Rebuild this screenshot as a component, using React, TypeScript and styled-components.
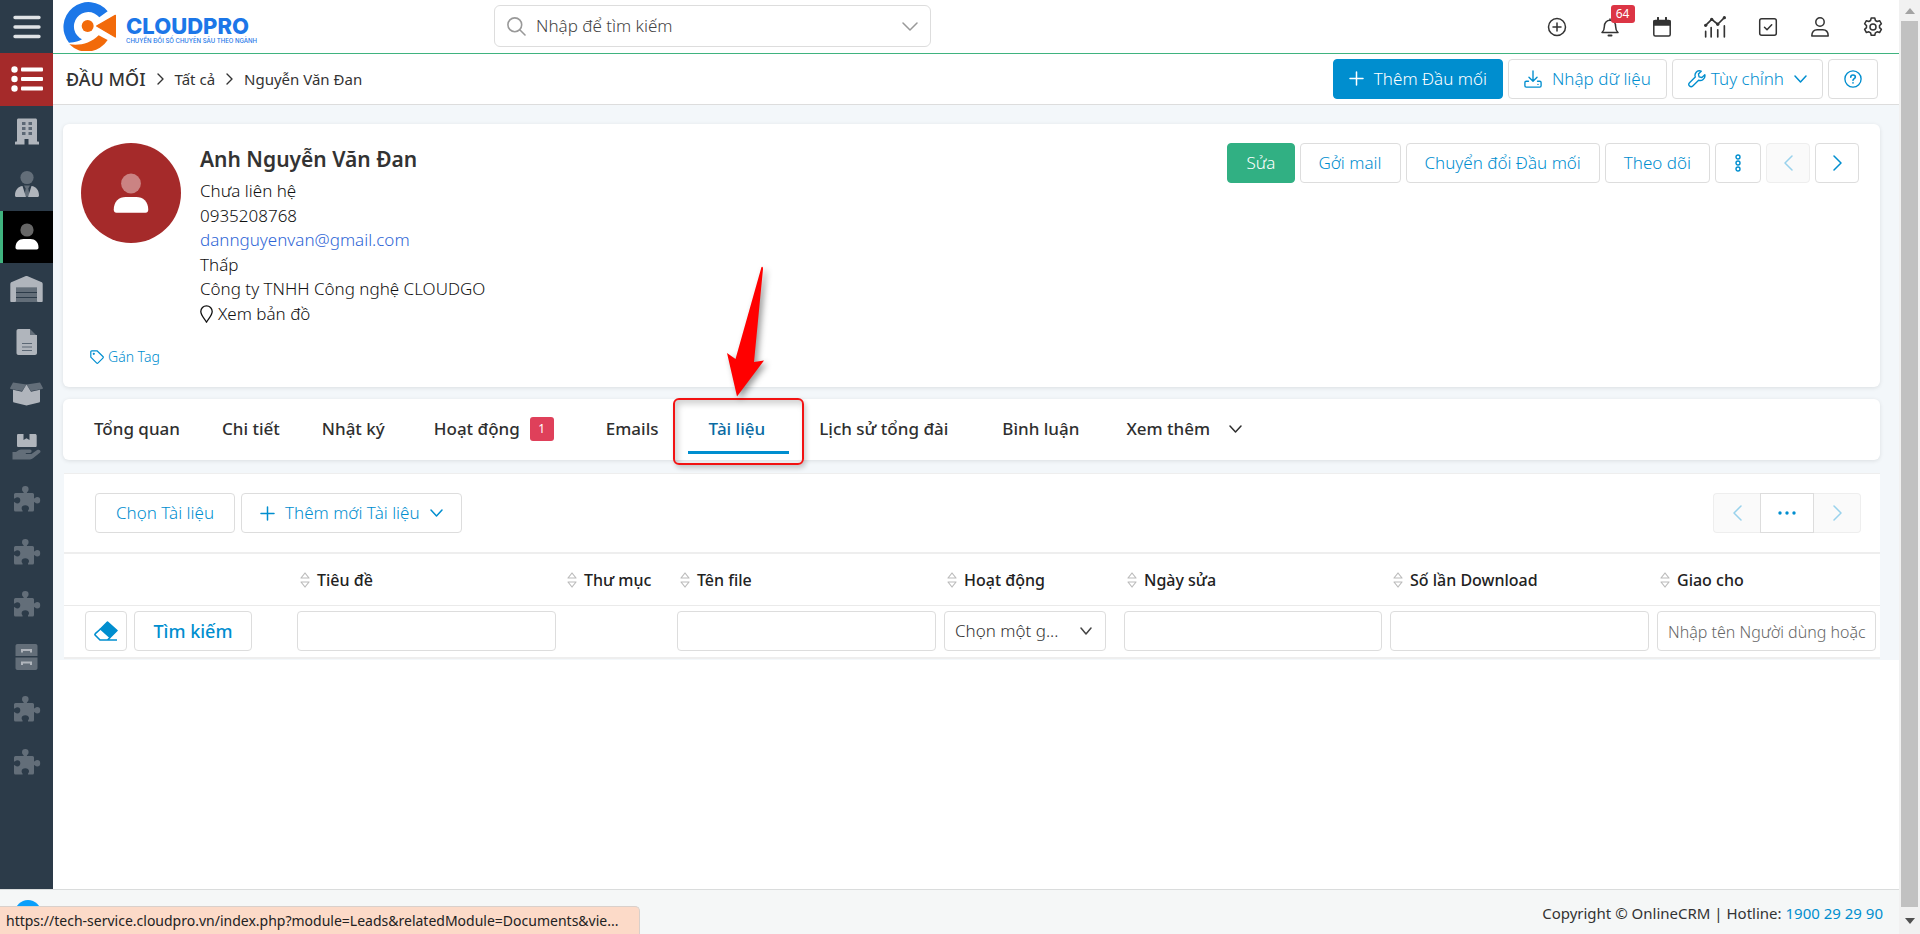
import React from 'react';
import styled, { createGlobalStyle, css } from 'styled-components';

const BLUE = '#008ecf';
const INK = '#333';
const LINE = '#ddd';

const GlobalStyle = createGlobalStyle`
  * { box-sizing: border-box; }
  body { margin: 0; background: #fff; color: ${INK}; font: 400 16px/24px "Noto Sans", "Open Sans", sans-serif; }
  button, input, select { font: inherit; }
  button { cursor: pointer; }
  a { color: inherit; text-decoration: none; }
  svg { display: block; flex: none; }
`;

/* ---------- Frame ---------- */

const Page = styled.div`
  display: grid;
  grid-template-columns: 53px minmax(0, 1fr) 21px;
  grid-template-rows: 1fr 45px;
  min-height: 100vh;
`;

const Sidebar = styled.nav`
  background: #2c3b49;
`;

const MenuToggle = styled.button`
  display: flex;
  align-items: center;
  justify-content: center;
  width: 100%;
  height: 53px;
  padding: 0;
  border: 0;
  background: none;
`;

const ModuleList = styled.ul`
  display: flex;
  flex-direction: column;
  height: 735px;
  margin: 0;
  padding: 0;
  list-style: none;
`;

const ModuleItem = styled.li<{ $tone?: 'list' | 'current' }>`
  flex: 1;
  display: flex;
  ${(p) => p.$tone === 'list' && css`background: #a52a2a;`}
  ${(p) => p.$tone === 'current' && css`background: #000; box-shadow: inset 3px 0 #3fb37f;`}
`;

const ModuleLink = styled.a`
  flex: 1;
  display: flex;
  align-items: center;
  justify-content: center;
`;

const Main = styled.main`
  display: flex;
  flex-direction: column;
  min-width: 0;
`;

const Footer = styled.footer`
  grid-column: 1 / 3;
  display: flex;
  justify-content: space-between;
  padding: 0 16px 0 15px;
  border-top: 1px solid #dadcdc;
  background: #f5f7f7;
  font-size: 15px;
  overflow: hidden;
`;

const ChatBubble = styled.span`
  width: 26px;
  height: 26px;
  margin-top: 10px;
  border-radius: 50%;
  background: #0a9ffb;
`;

const Copyright = styled.p`
  margin: 11px 0 0;
  a { color: ${BLUE}; }
`;

const ScrollTrack = styled.div`
  grid-column: 3;
  grid-row: 1 / 3;
  display: flex;
  flex-direction: column;
  align-items: center;
  background: #f1f1f1;
`;

const ScrollArrow = styled.span<{ $down?: boolean }>`
  display: flex;
  align-items: center;
  justify-content: center;
  width: 100%;
  height: ${(p) => (p.$down ? 27 : 21)}px;
`;

const ScrollThumb = styled.span`
  flex: 1;
  width: 17px;
  background: #c1c1c1;
`;

const LinkStatus = styled.div`
  position: fixed;
  left: 0;
  bottom: 0;
  width: 640px;
  height: 28px;
  padding: 2px 6px 0;
  border: 1px solid #d9d0cb;
  border-width: 1px 1px 0 0;
  border-top-right-radius: 5px;
  background: #fcdac8;
  color: #222;
  font-size: 14px;
  white-space: nowrap;
`;

/* ---------- Top bar ---------- */

const TopBar = styled.header`
  display: flex;
  align-items: stretch;
  height: 54px;
  border-bottom: 1px solid #3fb37f;
`;

const Brand = styled.a`
  display: flex;
  gap: 10px;
  width: 441px;
  padding: 1px 0 0 10px;
  color: #1c77e8;
`;

const BrandText = styled.span`
  display: flex;
  flex-direction: column;
  padding-top: 13px;
  font-family: Inter, sans-serif;
`;

const BrandName = styled.strong`
  font-size: 22px;
  line-height: 24px;
  font-weight: 800;
`;

const BrandTagline = styled.span`
  font-size: 6px;
  line-height: 6px;
  font-weight: 500;
`;

const SearchBox = styled.label`
  display: flex;
  align-items: center;
  gap: 10px;
  width: 437px;
  height: 42px;
  margin-top: 5px;
  padding: 0 12px;
  border: 1px solid ${LINE};
  border-radius: 6px;
  input {
    flex: 1;
    min-width: 0;
    padding: 0;
    border: 0;
    outline: 0;
    background: none;
    font-size: 17px;
    font-weight: 300;
  }
  input::placeholder { color: #444; opacity: 1; }
`;

const QuickActions = styled.div`
  display: flex;
  width: 368px;
  margin-left: auto;
`;

const QuickAction = styled.button`
  position: relative;
  flex: 1;
  display: flex;
  align-items: center;
  justify-content: center;
  padding: 1px 0 0;
  border: 0;
  background: none;
  color: ${INK};
`;

const AlertCount = styled.span`
  position: absolute;
  top: 5px;
  left: 27px;
  width: 24px;
  height: 18px;
  border-radius: 3px;
  background: #dc3545;
  color: #fff;
  font-size: 12px;
  line-height: 18px;
`;

/* ---------- Buttons ---------- */

const Button = styled.button<{ $tone?: 'primary' | 'success'; $width?: number; $snug?: boolean; $medium?: boolean }>`
  display: inline-flex;
  align-items: center;
  justify-content: center;
  gap: 10px;
  height: 40px;
  ${(p) => p.$width && css`width: ${p.$width}px;`}
  padding: 0 ${(p) => (p.$width ? 0 : p.$snug ? 15 : 18)}px;
  border: 1px solid ${LINE};
  border-radius: 4px;
  background: #fff;
  color: ${BLUE};
  font-size: ${(p) => (p.$medium ? 18 : 17)}px;
  font-weight: ${(p) => (p.$medium ? 500 : 300)};
  white-space: nowrap;
  ${(p) => p.$tone === 'primary' && css`background: ${BLUE}; border-color: ${BLUE}; color: #fff;`}
  ${(p) => p.$tone === 'success' && css`background: #31b083; border-color: #31b083; color: #fff;`}
  &:disabled { background: #fafafa; border-color: #eee; color: #99d2ec; }
`;

const IconLabel = styled.span`
  display: flex;
  align-items: center;
  gap: 5px;
`;

/* ---------- Breadcrumb bar ---------- */

const CrumbBar = styled.div`
  display: flex;
  align-items: center;
  justify-content: space-between;
  height: 51px;
  padding: 0 21px 1px 13px;
  border-bottom: 1px solid ${LINE};
`;

const Crumbs = styled.nav`
  display: flex;
  align-items: center;
  gap: 11px;
  font-size: 15px;
`;

const CrumbRoot = styled.a`
  font-size: 18px;
  font-weight: 500;
`;

const ButtonRow = styled.div<{ $gap?: number }>`
  display: flex;
  gap: ${(p) => p.$gap ?? 5}px;
`;

/* ---------- Record ---------- */

const Content = styled.div`
  display: flex;
  flex-direction: column;
  padding: 19px 19px 0 10px;
  background: #f3f7fa;
`;

const Card = styled.section`
  border-radius: 6px;
  background: #fff;
  box-shadow: 0 1px 4px rgba(0, 0, 0, 0.1);
`;

const RecordCard = styled(Card)`
  height: 263px;
  padding: 19px 21px 0 18px;
`;

const RecordTop = styled.div`
  display: flex;
  align-items: flex-start;
  gap: 19px;
  height: 202px;
`;

const Avatar = styled.div`
  display: flex;
  align-items: center;
  justify-content: center;
  width: 100px;
  height: 100px;
  border-radius: 50%;
  background: #a52a2a;
`;

const Person = styled.div`
  flex: 1;
`;

const PersonName = styled.h1`
  margin: 0 0 4px;
  font-size: 21px;
  line-height: 32px;
  font-weight: 600;
`;

const Facts = styled.ul`
  margin: 0;
  padding: 0;
  list-style: none;
  font-size: 17px;
  font-weight: 300;
  color: #111;
`;

const Fact = styled.li`
  height: 24px;
  line-height: 24px;
  &:nth-child(odd) { height: 25px; }
`;

const MailLink = styled.a`
  color: #2f66d6;
`;

const TagButton = styled.button`
  display: flex;
  align-items: center;
  gap: 4px;
  margin: 0;
  padding: 0 0 0 9px;
  border: 0;
  background: none;
  color: ${BLUE};
  font-size: 14px;
  line-height: 24px;
  font-weight: 300;
`;

/* ---------- Tabs ---------- */

const TabCard = styled(Card)`
  display: flex;
  height: 61px;
  margin-top: 12px;
  padding-left: 10px;
`;

const Tab = styled.a<{ $pad?: number; $active?: boolean }>`
  position: relative;
  display: flex;
  align-items: center;
  gap: 10px;
  padding: 0 ${(p) => p.$pad ?? 21}px 2px;
  color: ${(p) => (p.$active ? '#0a6ba3' : '#2f2f2f')};
  font-size: 17px;
  font-weight: 500;
  ${(p) => p.$active && css`
    &::after {
      content: '';
      position: absolute;
      left: 5px;
      right: 2px;
      bottom: 6px;
      height: 3px;
      background: ${BLUE};
    }
  `}
`;

const TabMore = styled(Tab)`
  gap: 19px;
`;

const TabCount = styled.span`
  width: 24px;
  height: 24px;
  border-radius: 3px;
  background: #df405a;
  color: #fff;
  font-size: 12px;
  line-height: 24px;
  font-weight: 400;
  text-align: center;
`;

const Highlight = styled.span`
  position: absolute;
  inset: -1px -13px -5px -10px;
  border: 2px solid #f21313;
  border-radius: 6px;
  box-shadow: 2px 3px 5px rgba(0, 0, 0, 0.2), inset 3px 4px 6px rgba(0, 0, 0, 0.18);
`;

const ArrowMark = styled.svg`
  position: absolute;
  left: 42px;
  bottom: 63px;
  filter: drop-shadow(3px 3px 3px rgba(0, 0, 0, 0.4));
`;

/* ---------- Related list ---------- */

const Panel = styled.section`
  margin: 13px 0 1px 1px;
  border-top: 1px solid #eee;
  background: #fff;
`;

const PanelBar = styled.div`
  display: flex;
  justify-content: space-between;
  padding: 19px 19px 19px 31px;
`;

const Pager = styled.div`
  display: flex;
  & > button { border-radius: 0; }
  & > :first-child { border-right: 0; border-radius: 4px 0 0 4px; }
  & > :last-child { border-left: 0; border-radius: 0 4px 4px 0; }
`;

const DataTable = styled.table`
  width: 100%;
  table-layout: fixed;
  border-collapse: collapse;
  border-top: 2px solid #eee;
  border-bottom: 2px solid #eee;
`;

const HeadCell = styled.th`
  height: 52px;
  padding: 2px 0 0 7px;
  border-bottom: 1px solid #eaeaea;
  color: #222;
  font-size: 16px;
  font-weight: 500;
  text-align: left;
`;

const SortLabel = styled.span`
  display: flex;
  align-items: center;
  gap: 7px;
  white-space: nowrap;
`;

const FilterCell = styled.td`
  height: 53px;
  padding: 0 4px;
`;

const ActionCell = styled(FilterCell)`
  padding-left: 21px;
`;

const Field = styled.input`
  display: block;
  width: 100%;
  height: 40px;
  padding: 2px 6px 0 10px;
  border: 1px solid ${LINE};
  border-radius: 4px;
  background: #fff;
  font-size: 16px;
  font-weight: 300;
  &::placeholder { color: #666; opacity: 1; }
`;

const SelectWrap = styled.span`
  position: relative;
  display: block;
  width: 162px;
  svg { position: absolute; right: 14px; top: 16px; pointer-events: none; }
`;

const Select = styled.select`
  appearance: none;
  width: 100%;
  height: 40px;
  padding: 0 40px 0 10px;
  border: 1px solid ${LINE};
  border-radius: 4px;
  background: #fff;
  color: #333;
  font-size: 17px;
  font-weight: 300;
`;

/* ---------- Icons ---------- */

const Chevron = ({ dir, w = 13, h = 8, stroke = 'currentColor', sw = 1.5 }: { dir: 'left' | 'right' | 'down' | 'up'; w?: number; h?: number; stroke?: string; sw?: number }) => {
  const d = {
    down: `M1 1L${w / 2} ${h - 1}L${w - 1} 1`,
    up: `M1 ${h - 1}L${w / 2} 1L${w - 1} ${h - 1}`,
    right: `M1 1L${w - 1} ${h / 2}L1 ${h - 1}`,
    left: `M${w - 1} 1L1 ${h / 2}L${w - 1} ${h - 1}`,
  }[dir];
  return (
    <svg width={w} height={h} viewBox={`0 0 ${w} ${h}`} fill="none" stroke={stroke} strokeWidth={sw} strokeLinecap="round" strokeLinejoin="round" aria-hidden="true">
      <path d={d} />
    </svg>
  );
};

const PlusIcon = () => (
  <svg width="15" height="15" viewBox="0 0 15 15" stroke="currentColor" strokeWidth="1.5" strokeLinecap="round" aria-hidden="true">
    <path d="M7.5 1v13M1 7.5h13" />
  </svg>
);

const LineIcon = ({ size = 20, children }: { size?: number; children: React.ReactNode }) => (
  <svg width={size} height={size} viewBox="0 0 20 20" fill="none" stroke="currentColor" strokeWidth="1.5" strokeLinecap="round" strokeLinejoin="round" aria-hidden="true">
    {children}
  </svg>
);

const DIM = 'rgba(176,181,188,.42)';
const LIT = '#b0b5bc';

const SideIcon = ({ width = 28, children }: { width?: number; children: React.ReactNode }) => (
  <svg width={width} height="28" viewBox={`0 0 ${width} 28`} aria-hidden="true">{children}</svg>
);

const Puzzle = () => (
  <SideIcon>
    <path fill={DIM} d="M1 9.500Q1 8 2.500 8H10.800C10.800 6.800 9 6.500 9 4.200A3.300 3.300 0 0 1 15.600 4.200C15.600 6.500 13.800 6.800 13.800 8H19.500Q21 8 21 9.500V13.600C22 13.600 22.500 12 24.200 12A3 3.300 0 0 1 24.200 18.600C22.500 18.600 22 17 21 17V25Q21 26.500 19.500 26.500H15C14.500 25.500 16 24.800 16 23.200C16 21.400 14.500 20.300 12.300 20.300S8.600 21.400 8.600 23.200C8.600 24.800 10 25.500 9.600 26.500H2.500Q1 26.500 1 25V17C2 17 2.800 18.400 4.300 18.400A3 3.100 0 0 0 4.300 12.200C2.800 12.200 2 13.600 1 13.600Z" />
  </SideIcon>
);

const PersonGlyph = ({ scale = 1, headOpacity = 0.4 }: { scale?: number; headOpacity?: number }) => (
  <svg width={24 * scale} height={27 * scale} viewBox="0 0 24 27" fill="#fff" aria-hidden="true">
    <circle cx="12" cy="7" r="6.600" opacity={headOpacity} />
    <path d="M.5 24.500C.5 19 4 16 8.500 16h7c4.500 0 8 3 8 8.500 0 1.200-.7 2-1.800 2H2.300c-1.100 0-1.800-.8-1.800-2z" />
  </svg>
);

const modules: { name: string; tone?: 'list' | 'current'; icon: React.ReactNode }[] = [
  {
    name: 'Danh sách', tone: 'list', icon: (
      <svg width="32" height="26" viewBox="0 0 32 26" fill="#fff" aria-hidden="true">
        {[3.5, 13, 22.5].map((y) => (
          <g key={y}><circle cx="3.500" cy={y} r="3.200" /><rect x="10" y={y - 2} width="22" height="4" rx="1" /></g>
        ))}
      </svg>
    ),
  },
  {
    name: 'Công ty', icon: (
      <SideIcon width={24}>
        <path fill={LIT} d="M2 2.500C2 1.600 2.600 1 3.500 1h17c.9 0 1.500.6 1.500 1.500V24h1c.6 0 1 .4 1 1v2H13.500v-5.500h-4V27H0v-2c0-.6.4-1 1-1h1z" transform="translate(0 -.5)" />
        <path fill="#5c6875" d="M7 4h3.500v3H7zM13.500 4H17v3h-3.500zM7 9h3.500v3H7zM13.500 9H17v3h-3.500zM7 14h3.500v3H7zM13.500 14H17v3h-3.500z" />
      </SideIcon>
    ),
  },
  {
    name: 'Người liên hệ', icon: (
      <SideIcon width={24}>
        <circle cx="12" cy="7.500" r="6.600" fill={DIM} />
        <path fill={LIT} d="M7.500 16L11 27H1.500C.6 27 0 26.400 0 25.500 0 20 3 16.500 7.500 16zM16.500 16L13 27h9.500c.9 0 1.500-.6 1.500-1.500 0-5.500-3-9-7.500-9.500z" />
        <path fill={DIM} d="M9 15.500h6l-1.700 3L14.500 25 12 27l-2.500-2 1.200-6.500z" />
      </SideIcon>
    ),
  },
  { name: 'Đầu mối', tone: 'current', icon: <PersonGlyph /> },
  {
    name: 'Kho', icon: (
      <SideIcon width={33}>
        <path fill={LIT} d="M15.300 1.300c.8-.4 1.600-.4 2.400 0l13.500 5.600c1 .4 1.500 1.200 1.500 2.200V26c0 .6-.4 1-1 1H28c-.6 0-1-.4-1-1V12.500H6V26c0 .6-.4 1-1 1H1.300c-.6 0-1-.4-1-1V9.100c0-1 .5-1.800 1.500-2.200z" />
        <path fill={DIM} d="M6 12.500h21V27H6z" />
        <path stroke="#2c3b49" strokeWidth="1" d="M6 17.500h21M6 22.500h21" />
      </SideIcon>
    ),
  },
  {
    name: 'Báo giá', icon: (
      <SideIcon width={22}>
        <path fill={LIT} d="M2.500 1H14v6h7v18c0 1.200-.8 2-2 2H2.500C1.300 27 .5 26.200.5 25V3c0-1.200.8-2 2-2z" />
        <path fill={DIM} d="M14 1l7 7h-7z" />
        <path stroke="#5c6875" strokeWidth="1.200" d="M6 15.500h10M6 19h10M6 22.500h10" />
      </SideIcon>
    ),
  },
  {
    name: 'Sản phẩm', icon: (
      <SideIcon width={33}>
        <path fill={DIM} d="M3 2.500l13.500 2L12 11 .8 9c-.6-.1-.9-.7-.6-1.200zM30 2.500l-13.500 2L21 11l11.200-2c.6-.1.900-.7.600-1.200z" />
        <path fill={LIT} d="M16.500 4.500l4.500 7.200 9-1.900v11.400c0 .7-.4 1.200-1.100 1.400l-12.400 2.900-12.400-2.900c-.7-.2-1.100-.7-1.100-1.400V9.800l9 1.900z" />
      </SideIcon>
    ),
  },
  {
    name: 'Dịch vụ', icon: (
      <SideIcon width={29}>
        <path fill={LIT} d="M6 1h5.500v6l3-1.700 3 1.700V1H23c1 0 1.700.7 1.700 1.700v10c0 .7-.5 1.300-1.200 1.300h-17c-.9 0-1.500-.5-1.500-1.300v-10C5 1.700 5.400 1 6 1z" />
        <path fill={DIM} d="M.5 19H4l2.500-1.700c.8-.5 1.700-.8 2.600-.8h8.700c2.400 0 2.400 3.400 0 3.400h-4v1.200h5.700l5.600-4c2.200-1.500 4.600 1 2.700 2.700l-6.500 5.300c-1 .8-2 1.300-3.300 1.300H.5z" />
      </SideIcon>
    ),
  },
  { name: 'Mô-đun 1', icon: <Puzzle /> },
  { name: 'Mô-đun 2', icon: <Puzzle /> },
  { name: 'Mô-đun 3', icon: <Puzzle /> },
  {
    name: 'Tài liệu', icon: (
      <SideIcon width={24}>
        <path fill={DIM} d="M2.500 1h18c1.200 0 2 .8 2 2v10H.5V3c0-1.200.8-2 2-2zM.5 14.500h22V25c0 1.200-.8 2-2 2h-18c-1.200 0-2-.8-2-2z" />
        <path fill="none" stroke={LIT} strokeWidth="2" d="M7 9.500V7h9v2.500M7 22v-2.500h9V22" />
      </SideIcon>
    ),
  },
  { name: 'Mô-đun 4', icon: <Puzzle /> },
  { name: 'Mô-đun 5', icon: <Puzzle /> },
];

const SortIcon = () => (
  <svg width="10" height="16" viewBox="0 0 10 16" fill="none" stroke="#bbb" strokeWidth="1.200" strokeLinejoin="round" aria-hidden="true">
    <path d="M5 1l4 5H1zM5 15l4-5H1z" />
  </svg>
);

const columns = [
  { label: 'Tiêu đề', width: 267, kind: 'text' },
  { label: 'Thư mục', width: 113, kind: 'none' },
  { label: 'Tên file', width: 267, kind: 'text' },
  { label: 'Hoạt động', width: 180, kind: 'select' },
  { label: 'Ngày sửa', width: 266, kind: 'text' },
  { label: 'Số lần Download', width: 267, kind: 'text' },
  { label: 'Giao cho', width: 227, kind: 'text', placeholder: 'Nhập tên Người dùng hoặc' },
];

const Col = styled.col<{ $w: number }>`
  width: ${(p) => p.$w}px;
`;

export default function App() {
  return (
    <Page>
      <GlobalStyle />
      <Sidebar aria-label="Mô-đun">
        <MenuToggle aria-label="Mở menu">
          <svg width="28" height="24" viewBox="0 0 28 24" stroke="#dfe2e5" strokeWidth="3.400" strokeLinecap="round" aria-hidden="true">
            <path d="M2 2.500h24M2 12h24M2 21.500h24" />
          </svg>
        </MenuToggle>
        <ModuleList>
          {modules.map((m) => (
            <ModuleItem key={m.name} $tone={m.tone}>
              <ModuleLink href="#" aria-label={m.name}>{m.icon}</ModuleLink>
            </ModuleItem>
          ))}
        </ModuleList>
      </Sidebar>

      <Main>
        <TopBar>
          <Brand href="#">
            <svg width="53" height="50" viewBox="189 3 159 150" aria-hidden="true">
              <path fill="#1c77e8" d="M323 34A74 74 0 1 0 207 128C226 127 238 123 246 118A43 43 0 1 1 298 52Z" />
              <path fill="#f26a0a" d="M208 133C240 138 272 130 296 106L323 120A74 74 0 0 1 208 133Z" />
              <circle cx="263" cy="78" r="18" fill="#f26a0a" />
              <path fill="#f26a0a" stroke="#f26a0a" strokeWidth="4" strokeLinejoin="round" d="M290 78L346 46V111Z" />
            </svg>
            <BrandText>
              <BrandName>CLOUDPRO</BrandName>
              <BrandTagline>CHUYỂN ĐỔI SỐ CHUYÊN SÂU THEO NGÀNH</BrandTagline>
            </BrandText>
          </Brand>
          <SearchBox>
            <svg width="19" height="19" viewBox="0 0 19 19" fill="none" stroke="#999" strokeWidth="1.600" strokeLinecap="round" aria-hidden="true">
              <circle cx="7.800" cy="7.800" r="6.900" /><path d="M13 13l5 5" />
            </svg>
            <input type="search" aria-label="Tìm kiếm" placeholder="Nhập để tìm kiếm" />
            <Chevron dir="down" w={16} h={9} stroke="#999" />
          </SearchBox>
          <QuickActions>
            <QuickAction aria-label="Thêm nhanh">
              <LineIcon><circle cx="10" cy="10" r="8.500" /><path d="M10 6v8M6 10h8" /></LineIcon>
            </QuickAction>
            <QuickAction aria-label="Thông báo">
              <LineIcon><path d="M10 2v1.200M2 15.500c1.700-1.500 2.400-3 2.400-6.300C4.400 5.900 6.700 3.300 10 3.300s5.600 2.600 5.600 5.900c0 3.300.700 4.800 2.400 6.300z" /><path d="M8.500 18.500h3" strokeWidth="2" /></LineIcon>
              <AlertCount>64</AlertCount>
            </QuickAction>
            <QuickAction aria-label="Lịch">
              <LineIcon><rect x="1.800" y="3.500" width="16.400" height="15.500" rx="1.500" /><path d="M2 4h16v4H2z" fill="currentColor" /><path d="M6 .8V4M14 .8V4" strokeWidth="2" /></LineIcon>
            </QuickAction>
            <QuickAction aria-label="Báo cáo">
              <LineIcon size={22}><path d="M1.500 8.500L7 3l5.500 4.500L18.500 1.500M1.500 14v5M6.500 10.500V19M12.500 12.500V19M18.500 9v10" /><g fill="currentColor" stroke="none"><circle cx="1.500" cy="8.500" r="1.500" /><circle cx="7" cy="3" r="1.500" /><circle cx="12.500" cy="7.500" r="1.500" /><circle cx="18.500" cy="1.500" r="1.500" /></g></LineIcon>
            </QuickAction>
            <QuickAction aria-label="Công việc">
              <LineIcon><rect x="1.700" y="1.700" width="16.600" height="16.600" rx="2" /><path d="M6.500 10.200l2.500 2.500 4.700-5" /></LineIcon>
            </QuickAction>
            <QuickAction aria-label="Tài khoản">
              <LineIcon><circle cx="10" cy="5" r="4.200" /><path d="M1.800 19c0-4 2.200-6.300 5.400-6.300h5.600c3.200 0 5.400 2.300 5.400 6.300z" /></LineIcon>
            </QuickAction>
            <QuickAction aria-label="Cài đặt">
              <LineIcon><circle cx="10" cy="10" r="3" /><path d="M8.200 1h3.600l.6 2.500 1.700 1 2.500-.8 1.800 3.100-1.900 1.800v2l1.900 1.800-1.800 3.100-2.500-.7-1.700 1-.6 2.500H8.200l-.6-2.500-1.700-1-2.500.7-1.800-3.100 1.900-1.800v-2L1.600 6.800l1.800-3.100 2.500.8 1.700-1z" /></LineIcon>
            </QuickAction>
          </QuickActions>
        </TopBar>

        <CrumbBar>
          <Crumbs aria-label="Đường dẫn">
            <CrumbRoot href="#">ĐẦU MỐI</CrumbRoot>
            <Chevron dir="right" w={7} h={12} sw={1.4} />
            <a href="#">Tất cả</a>
            <Chevron dir="right" w={7} h={12} sw={1.4} />
            <a href="#">Nguyễn Văn Đan</a>
          </Crumbs>
          <ButtonRow>
            <Button $tone="primary" $snug><PlusIcon />Thêm Đầu mối</Button>
            <Button $snug>
              <LineIcon size={18}><path d="M10 1v11M5.500 8l4.500 4.500L14.500 8M5 12.500H2.500c-.9 0-1.500.6-1.500 1.500v3.500c0 .9.6 1.500 1.500 1.500h15c.9 0 1.500-.6 1.500-1.500V14c0-.9-.6-1.500-1.500-1.500H15M15.500 16h.1" /></LineIcon>
              Nhập dữ liệu
            </Button>
            <Button $snug>
              <IconLabel>
                <LineIcon size={18}><path d="M18.700 5.200l-3.200 3.100-3.200-.7-.7-3.200 3.100-3.100C12.500.5 10.200 1 8.900 2.800c-1.200 1.500-1.400 3.200-.8 5L1.700 14.200c-1 1-1 2.600 0 3.600s2.600 1 3.600 0l6.500-6.400c1.800.6 3.600.3 5-.9 1.700-1.400 2.400-3.300 1.900-5.300z" /></LineIcon>
                Tùy chỉnh
              </IconLabel>
              <Chevron dir="down" />
            </Button>
            <Button $width={50} aria-label="Trợ giúp">
              <LineIcon size={18}><circle cx="10" cy="10" r="9" /><path d="M7.500 8c0-1.500 1.100-2.500 2.500-2.500s2.600.9 2.600 2.300c0 1.700-2.600 1.900-2.600 3.700M10 14.300v.2" strokeWidth="1.800" /></LineIcon>
            </Button>
          </ButtonRow>
        </CrumbBar>

        <Content>
          <RecordCard>
            <RecordTop>
              <Avatar><PersonGlyph scale={1.5} headOpacity={0.42} /></Avatar>
              <Person>
                <PersonName>Anh Nguyễn Văn Đan</PersonName>
                <Facts>
                  <Fact>Chưa liên hệ</Fact>
                  <Fact>0935208768</Fact>
                  <Fact><MailLink href="mailto:dannguyenvan@gmail.com">dannguyenvan@gmail.com</MailLink></Fact>
                  <Fact>Thấp</Fact>
                  <Fact>Công ty TNHH Công nghệ CLOUDGO</Fact>
                  <Fact>
                    <IconLabel as="a" href="#">
                      <svg width="13" height="18" viewBox="0 0 13 18" fill="none" stroke="currentColor" strokeWidth="1.300" strokeLinejoin="round" aria-hidden="true">
                        <path d="M6.500 17.200C5.200 14.500.8 10.500.8 6.600.8 3.300 3.300.8 6.500.8s5.700 2.500 5.700 5.800c0 3.900-4.400 7.900-5.700 10.600z" />
                      </svg>
                      Xem bản đồ
                    </IconLabel>
                  </Fact>
                </Facts>
              </Person>
              <ButtonRow>
                <Button $tone="success">Sửa</Button>
                <Button>Gởi mail</Button>
                <Button>Chuyển đổi Đầu mối</Button>
                <Button>Theo dõi</Button>
                <Button $width={46} aria-label="Thêm thao tác">
                  <svg width="6" height="18" viewBox="0 0 6 18" fill="none" stroke="currentColor" strokeWidth="1.400" aria-hidden="true">
                    <circle cx="3" cy="3" r="2" /><circle cx="3" cy="9" r="2" /><circle cx="3" cy="15" r="2" />
                  </svg>
                </Button>
                <Button $width={44} disabled aria-label="Bản ghi trước"><Chevron dir="left" w={9} h={16} /></Button>
                <Button $width={44} aria-label="Bản ghi sau"><Chevron dir="right" w={9} h={16} /></Button>
              </ButtonRow>
            </RecordTop>
            <TagButton>
              <svg width="14" height="14" viewBox="0 0 14 14" fill="none" stroke="currentColor" strokeWidth="1.200" strokeLinejoin="round" aria-hidden="true">
                <path d="M.8 1.800c0-.6.400-1 1-1H7l5.900 5.700c.5.500.5 1.100 0 1.600L8.100 12.900c-.5.500-1.100.5-1.600 0L.8 7.200z" /><circle cx="3.800" cy="3.800" r=".5" />
              </svg>
              Gán Tag
            </TagButton>
          </RecordCard>

          <TabCard as="nav" aria-label="Thẻ thông tin">
            <Tab href="#">Tổng quan</Tab>
            <Tab href="#">Chi tiết</Tab>
            <Tab href="#">Nhật ký</Tab>
            <Tab href="#" $pad={28}>Hoạt động <TabCount>1</TabCount></Tab>
            <Tab href="#" $pad={24}>Emails</Tab>
            <Tab href="#" $pad={26} $active aria-current="page">
              Tài liệu
              <Highlight />
              <ArrowMark width="40" height="132" viewBox="0 0 40 132" aria-hidden="true">
                <path fill="#f00" d="M36.500 2Q38 .8 38 4L29 97l10-1.500L12 131.500 2 88l8.500 6z" />
              </ArrowMark>
            </Tab>
            <Tab href="#" $pad={28}>Lịch sử tổng đài</Tab>
            <Tab href="#" $pad={26}>Bình luận</Tab>
            <TabMore href="#">Xem thêm <Chevron dir="down" /></TabMore>
          </TabCard>

          <Panel>
            <PanelBar>
              <ButtonRow $gap={6}>
                <Button $width={140}>Chọn Tài liệu</Button>
                <Button><PlusIcon />Thêm mới Tài liệu<Chevron dir="down" /></Button>
              </ButtonRow>
              <Pager>
                <Button $width={47} disabled aria-label="Trang trước"><Chevron dir="left" w={9} h={16} /></Button>
                <Button $width={54} aria-label="Chọn trang">
                  <svg width="18" height="4" viewBox="0 0 18 4" fill="currentColor" aria-hidden="true"><circle cx="2" cy="2" r="1.700" /><circle cx="9" cy="2" r="1.700" /><circle cx="16" cy="2" r="1.700" /></svg>
                </Button>
                <Button $width={47} disabled aria-label="Trang sau"><Chevron dir="right" w={9} h={16} /></Button>
              </Pager>
            </PanelBar>
            <DataTable>
              <colgroup>
                <Col $w={229} />
                {columns.map((c) => <Col key={c.label} $w={c.width} />)}
              </colgroup>
              <thead>
                <tr>
                  <HeadCell aria-label="Thao tác" />
                  {columns.map((c) => (
                    <HeadCell key={c.label} scope="col"><SortLabel><SortIcon />{c.label}</SortLabel></HeadCell>
                  ))}
                </tr>
              </thead>
              <tbody>
                <tr>
                  <ActionCell>
                    <ButtonRow $gap={7}>
                      <Button $width={42} aria-label="Xóa bộ lọc">
                        <svg width="24" height="20" viewBox="0 0 24 20" fill="none" stroke="currentColor" strokeWidth="1.600" strokeLinejoin="round" aria-hidden="true">
                          <path d="M13.500 1L23 9.500l-7 7L6.500 8z" fill="currentColor" /><path d="M6.500 8L1.300 12.700c-.5.500-.5 1 0 1.500L6 19h17M16 16.500L13.500 19" />
                        </svg>
                      </Button>
                      <Button $width={118} $medium>Tìm kiếm</Button>
                    </ButtonRow>
                  </ActionCell>
                  {columns.map((c) => (
                    <FilterCell key={c.label}>
                      {c.kind === 'text' && <Field aria-label={c.label} placeholder={c.placeholder} />}
                      {c.kind === 'select' && (
                        <SelectWrap>
                          <Select aria-label={c.label}><option>Chọn một g...</option></Select>
                          <Chevron dir="down" w={12} stroke="#444" />
                        </SelectWrap>
                      )}
                    </FilterCell>
                  ))}
                </tr>
              </tbody>
            </DataTable>
          </Panel>
        </Content>
      </Main>

      <Footer>
        <ChatBubble />
        <Copyright>Copyright © OnlineCRM | Hotline: <a href="tel:1900292990">1900 29 29 90</a></Copyright>
      </Footer>

      <ScrollTrack aria-hidden="true">
        <ScrollArrow><svg width="10" height="6" viewBox="0 0 10 6" fill="#a3a3a3"><path d="M5 0l5 6H0z" /></svg></ScrollArrow>
        <ScrollThumb />
        <ScrollArrow $down><svg width="10" height="6" viewBox="0 0 10 6" fill="#505050"><path d="M5 6l5-6H0z" /></svg></ScrollArrow>
      </ScrollTrack>

      <LinkStatus>https://tech-service.cloudpro.vn/index.php?module=Leads&amp;relatedModule=Documents&amp;vie...</LinkStatus>
    </Page>
  );
}
